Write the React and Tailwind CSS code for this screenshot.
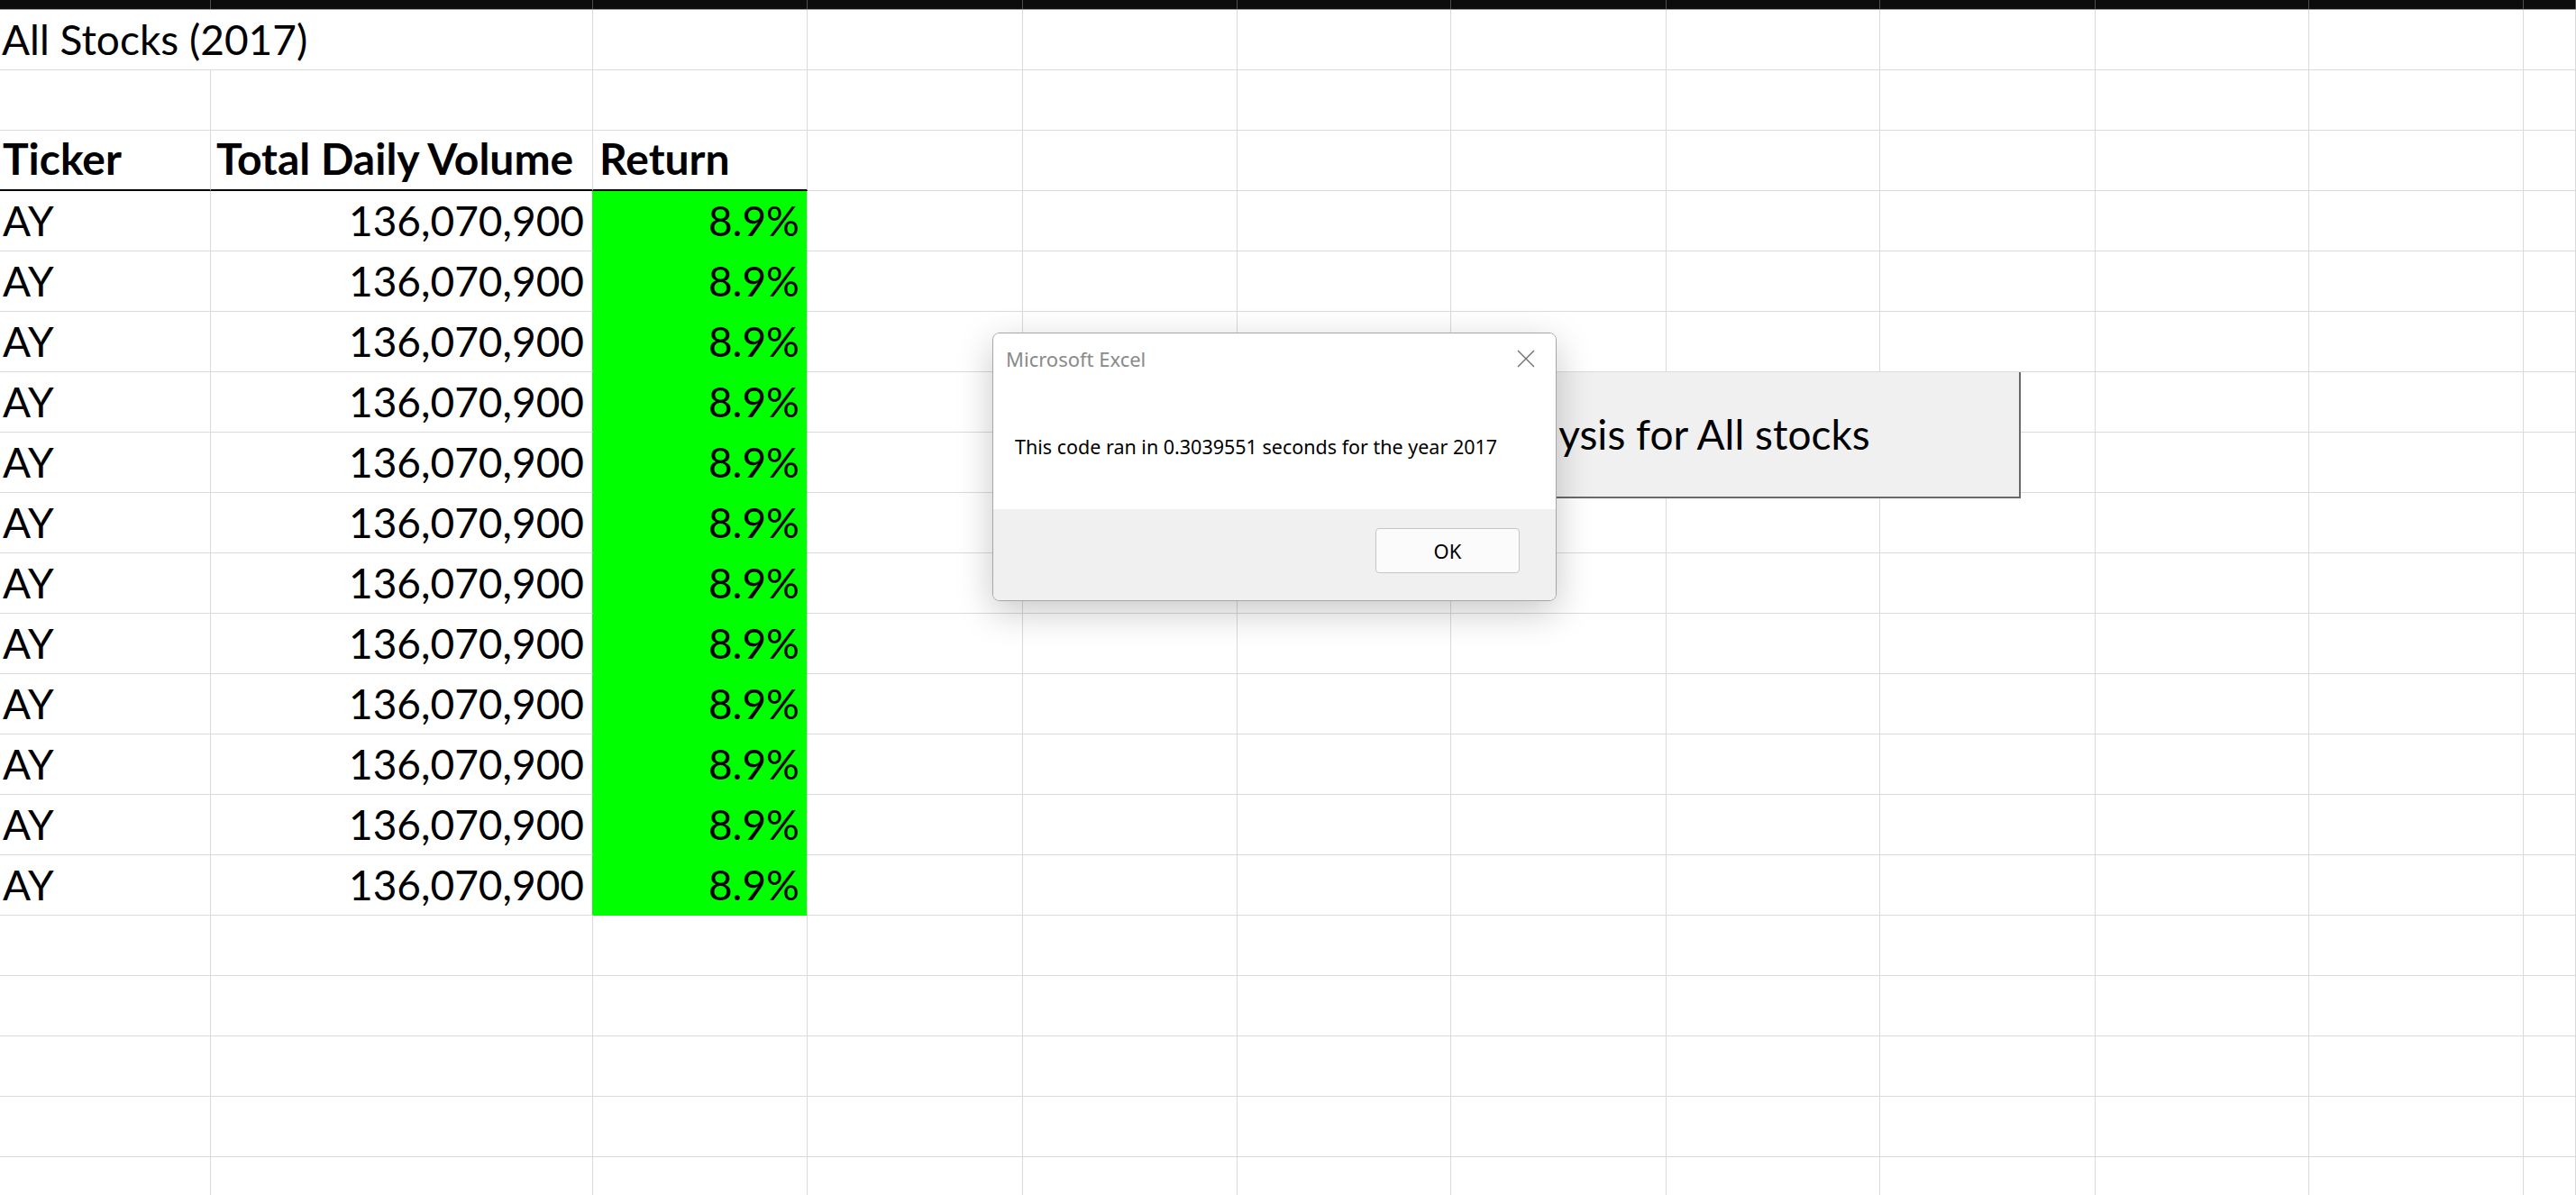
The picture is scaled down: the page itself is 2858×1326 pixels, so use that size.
import React from "react";

const COLS =
  "grid grid-cols-[234px_424px_238px_239px_238px_237px_239px_237px_239px_237px_238px_1fr]";

const EXTRA = Array.from({ length: 9 });
const DATA = Array.from({ length: 12 }, () => ({
  ticker: "AY",
  volume: "136,070,900",
  ret: "8.9%",
}));

function Blank({ className = "" }) {
  return <div className={`border-r border-b border-[#dadada] ${className}`} />;
}

function BlankCells() {
  return EXTRA.map((_, i) => <Blank key={i} />);
}

function EmptyRow() {
  return (
    <div className={`${COLS} h-[67px]`}>
      <Blank />
      <Blank />
      <Blank />
      <BlankCells />
    </div>
  );
}

function Dialog() {
  return (
    <div className="absolute left-[1101px] top-[369px] flex h-[298px] w-[626px] flex-col overflow-hidden rounded-[8px] border border-[#a6a6a6] bg-white font-[family-name:'Noto_Sans',sans-serif] shadow-[0_12px_40px_rgba(0,0,0,0.22)]">
      <div className="h-[195px] bg-white">
        <div className="flex items-start justify-between pl-[14px] pr-[23px] pt-[17px]">
          <span className="text-[22px] leading-none text-[#8a8a8a]">Microsoft Excel</span>
          <svg width="20" height="20" viewBox="0 0 20 20" className="mt-[1px]">
            <path d="M1 1 L19 19 M19 1 L1 19" stroke="#707070" strokeWidth="1.4" fill="none" />
          </svg>
        </div>
        <p className="mt-[76px] pl-[24px] text-[21.5px] leading-none text-black">
          This code ran in 0.3039551 seconds for the year 2017
        </p>
      </div>
      <div className="flex flex-1 items-start justify-end bg-[#f0f0f0] pr-[40px] pt-[21px]">
        <button className="flex h-[50px] w-[160px] items-center justify-center rounded-[4px] border border-[#c6c6c6] bg-[#fbfbfb] text-[22px] leading-none text-black">
          OK
        </button>
      </div>
    </div>
  );
}

export default function App() {
  const cell = "flex items-end pb-[10px] text-[46px] leading-none whitespace-nowrap";
  const head = "flex items-end pb-[10px] text-[48px] leading-none whitespace-nowrap font-bold";

  return (
    <div className="relative h-[1326px] w-[2858px] overflow-hidden bg-white font-[family-name:Lato,sans-serif] text-black">
      {/* column header strip, cut off at the top */}
      <div className={`${COLS} h-[11px] border-b border-[#9a9a9a] bg-[#0c0c0c]`}>
        {Array.from({ length: 12 }).map((_, i) => (
          <div key={i} className="border-r border-[#4d4d4d]" />
        ))}
      </div>

      <div className={`${COLS} h-[67px]`}>
        <div className={`${cell} border-b border-[#dadada] pl-[2px] overflow-visible`}>
          All Stocks (2017)
        </div>
        <Blank />
        <Blank />
        <BlankCells />
      </div>

      <EmptyRow />

      <div className={`${COLS} h-[67px]`}>
        <div className={`${head} border-r border-b-2 border-r-[#dadada] border-b-black pl-[3px]`}>
          Ticker
        </div>
        <div className={`${head} border-r border-b-2 border-r-[#dadada] border-b-black pl-[6px]`}>
          Total Daily Volume
        </div>
        <div className={`${head} border-r border-b-2 border-r-[#dadada] border-b-black pl-[7px]`}>
          Return
        </div>
        <BlankCells />
      </div>

      {DATA.map((row, i) => (
        <div key={i} className={`${COLS} h-[67px]`}>
          <div className={`${cell} border-r border-b border-[#dadada] pl-[3px]`}>{row.ticker}</div>
          <div className={`${cell} justify-end border-r border-b border-b-[#dadada] border-r-[#00ff00] pr-[9px]`}>
            {row.volume}
          </div>
          <div className={`${cell} justify-end border-r border-b border-r-[#dadada] border-b-[#00ff00] bg-[#00ff00] pr-[8px]`}>
            {row.ret}
          </div>
          <BlankCells />
        </div>
      ))}

      {Array.from({ length: 5 }).map((_, i) => (
        <EmptyRow key={i} />
      ))}

      {/* form button on the sheet */}
      <div className="absolute left-[1372px] top-[413px] flex h-[140px] w-[870px] items-center justify-center border-r-2 border-b-2 border-[#696969] bg-[#f0f0f0] pl-[12px] text-[46px] leading-none whitespace-nowrap">
        Run Analysis for All stocks
      </div>

      <Dialog />
    </div>
  );
}
